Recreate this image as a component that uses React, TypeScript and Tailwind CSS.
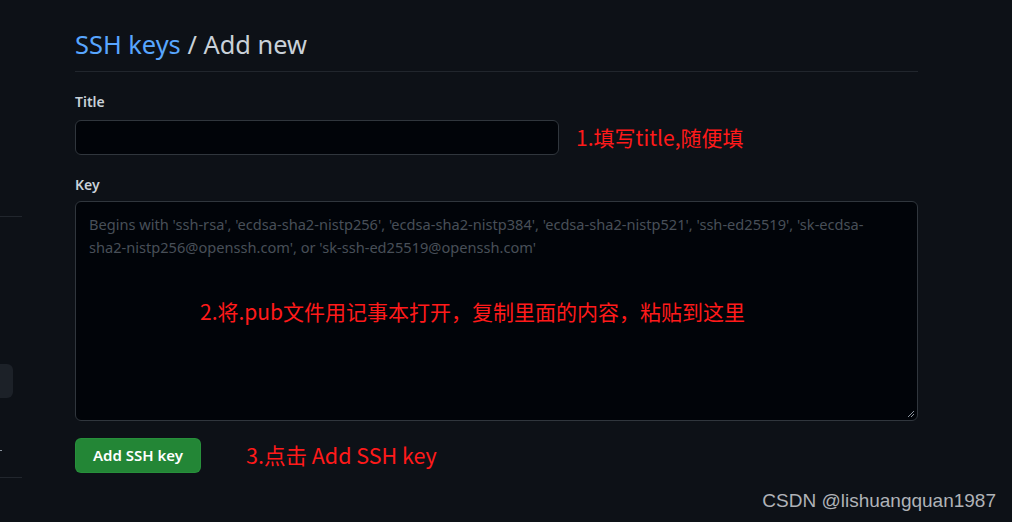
import React from "react";

export default function App() {
  const placeholder =
    "Begins with 'ssh-rsa', 'ecdsa-sha2-nistp256', 'ecdsa-sha2-nistp384', 'ecdsa-sha2-nistp521', 'ssh-ed25519', 'sk-ecdsa-sha2-nistp256@openssh.com', or 'sk-ssh-ed25519@openssh.com'";
  const cjk = { fontFamily: '"Noto Sans CJK SC", sans-serif' };
  return (
    <div
      className="relative w-[1012px] h-[522px] overflow-hidden bg-[#0d1117] text-[#c9d1d9]"
      style={{ fontFamily: '"Noto Sans", "Noto Sans CJK SC", sans-serif' }}
    >
      <div className="flex h-full">
        {/* left sidebar remnants */}
        <div className="w-[75px] shrink-0 flex flex-col items-start pt-[216px]">
          <div className="w-[22px] h-px bg-[#21262d]" />
          <div className="mt-[147px] w-[13px] h-[34px] rounded-r-md bg-[#1c2128]" />
          <div className="mt-[52px] w-[2px] h-px bg-[#8b949e]" />
          <div className="mt-[26px] w-[22px] h-px bg-[#21262d]" />
        </div>
        <div className="w-[843px] shrink-0 pt-[28px]">
          <h2 className="text-[25.4px] leading-[32px] font-normal pb-[11px] border-b border-[#21262d]">
            <span className="text-[#58a6ff]">SSH keys</span>
            <span className="text-[#c9d1d9]"> / Add new</span>
          </h2>
          <div className="mt-[19px]">
            <div className="text-[14px] leading-[21px] font-semibold text-[#c9d1d9]">Title</div>
            <div className="flex items-center mt-[8px]">
              <div className="w-[484px] h-[35px] rounded-[6px] border border-[#30363d] bg-[#010409]" />
              <div className="ml-[17px] text-[21px] text-[#ff1a1a]" style={cjk}>
                1.填写title,随便填
              </div>
            </div>
          </div>
          <div className="mt-[19px]">
            <div className="text-[14px] leading-[21px] font-semibold text-[#c9d1d9]">Key</div>
            <div className="relative mt-[6px] h-[220px] rounded-[6px] border border-[#30363d] bg-[#010409] pl-[13px] pr-[20px] pt-[11px]">
              <div className="text-[14.6px] leading-[23px] text-[#484f58]">{placeholder}</div>
              <div className="absolute left-[124px] top-[94px] text-[21px] text-[#ff1a1a]" style={cjk}>
                2.将.pub文件用记事本打开，复制里面的内容，粘贴到这里
              </div>
              <svg className="absolute right-[2px] bottom-[2px]" width="8" height="8" viewBox="0 0 8 8">
                <line x1="1" y1="7" x2="7" y2="1" stroke="#8b949e" strokeWidth="1" />
                <line x1="4" y1="7" x2="7" y2="4" stroke="#8b949e" strokeWidth="1" />
              </svg>
            </div>
          </div>
          <div className="flex items-center mt-[17px]">
            <button className="w-[126px] h-[35px] rounded-[6px] bg-[#238636] border border-[#2ea043]/40 text-white text-[15px] font-semibold">
              Add SSH key
            </button>
            <div className="ml-[45px] text-[21.5px] text-[#ff1a1a]" style={cjk}>
              3.点击 Add SSH key
            </div>
          </div>
        </div>
      </div>
      <div
        className="absolute right-[16px] bottom-[7px] text-[19px] text-[#b0b3b8]"
        style={{ fontFamily: '"Liberation Sans", sans-serif' }}
      >
        CSDN @lishuangquan1987
      </div>
    </div>
  );
}
